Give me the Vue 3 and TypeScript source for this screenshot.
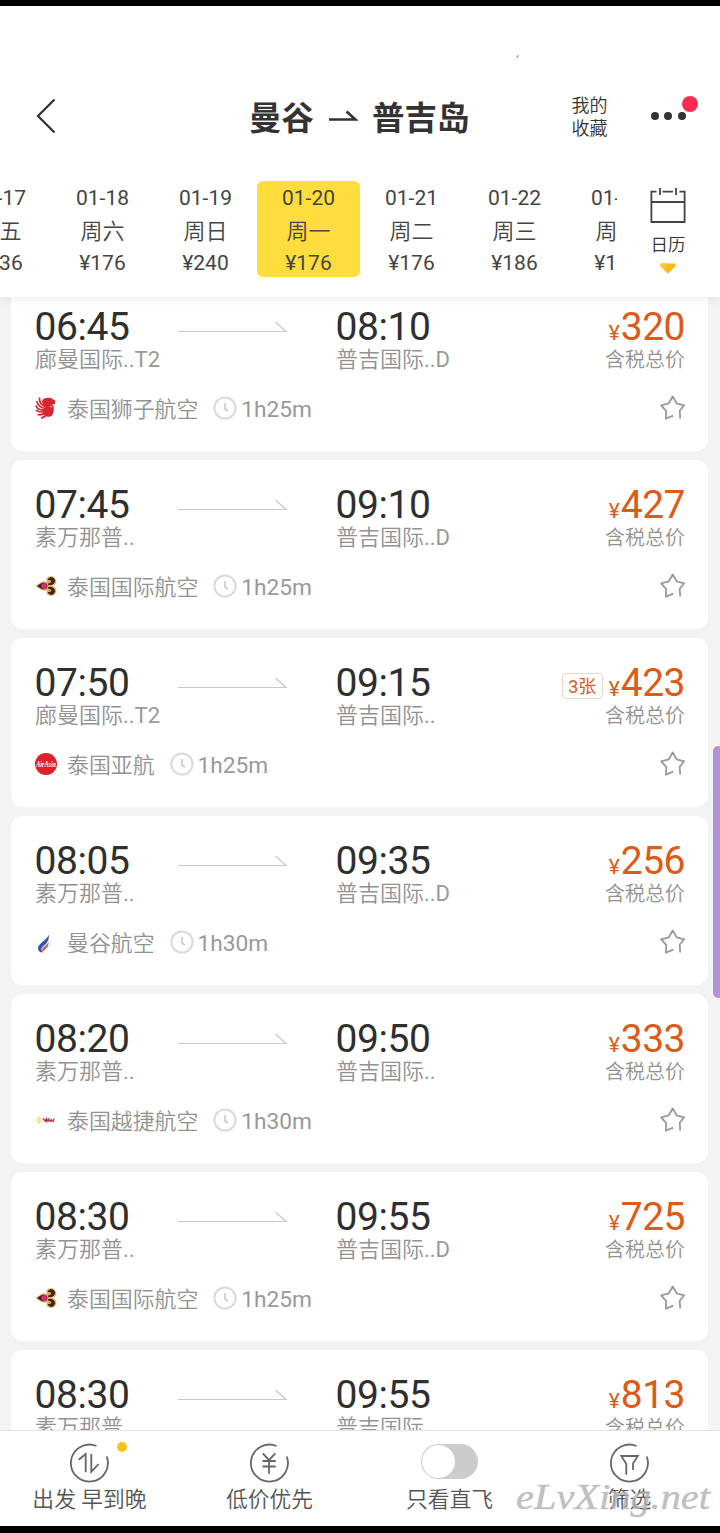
<script setup lang="ts">
interface DateItem {
  date: string
  week: string
  price: string
}
interface Airport {
  name: string
  tail: string
}
interface Flight {
  dep: string
  from: Airport
  arr: string
  to: Airport
  price: number
  airline: string
  logo: 'lion' | 'thai' | 'asia' | 'bangkok' | 'vietjet'
  duration: string
  left?: string
}

const activeDate = '01-20'
const dates: DateItem[] = [
  { date: '01-17', week: '周五', price: '¥136' },
  { date: '01-18', week: '周六', price: '¥176' },
  { date: '01-19', week: '周日', price: '¥240' },
  { date: '01-20', week: '周一', price: '¥176' },
  { date: '01-21', week: '周二', price: '¥176' },
  { date: '01-22', week: '周三', price: '¥186' },
  { date: '01-23', week: '周四', price: '¥186' },
]

const donMueang: Airport = { name: '廊曼国际', tail: '..T2' }
const suvarnabhumi: Airport = { name: '素万那普', tail: '..' }
const phuketD: Airport = { name: '普吉国际', tail: '..D' }
const phuket: Airport = { name: '普吉国际', tail: '..' }

const flights: Flight[] = [
  { dep: '06:45', from: donMueang, arr: '08:10', to: phuketD, price: 320, airline: '泰国狮子航空', logo: 'lion', duration: '1h25m' },
  { dep: '07:45', from: suvarnabhumi, arr: '09:10', to: phuketD, price: 427, airline: '泰国国际航空', logo: 'thai', duration: '1h25m' },
  { dep: '07:50', from: donMueang, arr: '09:15', to: phuket, price: 423, airline: '泰国亚航', logo: 'asia', duration: '1h25m', left: '3张' },
  { dep: '08:05', from: suvarnabhumi, arr: '09:35', to: phuketD, price: 256, airline: '曼谷航空', logo: 'bangkok', duration: '1h30m' },
  { dep: '08:20', from: suvarnabhumi, arr: '09:50', to: phuket, price: 333, airline: '泰国越捷航空', logo: 'vietjet', duration: '1h30m' },
  { dep: '08:30', from: suvarnabhumi, arr: '09:55', to: phuketD, price: 725, airline: '泰国国际航空', logo: 'thai', duration: '1h25m' },
  { dep: '08:30', from: suvarnabhumi, arr: '09:55', to: phuket, price: 813, airline: '泰国国际航空', logo: 'thai', duration: '1h25m' },
]
</script>

<template>
  <div class="screen">
    <header class="top">
      <i class="speck"></i>
      <div class="nav">
        <svg class="back" width="24" height="38" viewBox="0 0 24 38">
          <path d="M20.500 2.500 4 19l16.500 16.500" fill="none" stroke="#333" stroke-width="2.300" />
        </svg>
        <h1 class="title">
          <span>曼谷</span>
          <svg width="30" height="14" viewBox="0 0 30 14">
            <path d="M1 10.500H27.500L18.500 2.500" fill="none" stroke="#333" stroke-width="2.600" />
          </svg>
          <span>普吉岛</span>
        </h1>
        <div class="fav">我的<br />收藏</div>
        <div class="more"><i></i><i></i><i></i><b></b></div>
      </div>
      <div class="dates">
        <div class="strip">
          <div v-for="d in dates" :key="d.date" class="day" :class="{ active: d.date === activeDate }">
            <span class="num">{{ d.date }}</span>
            <span class="week">{{ d.week }}</span>
            <span class="num">{{ d.price }}</span>
          </div>
        </div>
        <div class="calendar">
          <svg width="36" height="36" viewBox="0 0 36 36" fill="none" stroke="#444" stroke-width="1.800">
            <path d="M6.500 3.700H1.400V34H34.600V3.700H29.500M12.500 3.700H23M1.400 14H34.600M10 0V7M26 0V7" />
          </svg>
          <span>日历</span>
          <svg class="tri" width="16" height="11" viewBox="0 0 16 11">
            <path d="M.5 0.500H15.500V3.500L8 10.500.5 3.500Z" fill="#fbb917" />
            <path d="M.5.500H9L4 6.500.5 3.500Z" fill="#fdc83c" />
          </svg>
        </div>
      </div>
    </header>

    <main class="list">
      <article v-for="(f, i) in flights" :key="i" class="card">
        <div class="main">
          <div class="point">
            <div class="time">{{ f.dep }}</div>
            <div class="port">{{ f.from.name }}<span>{{ f.from.tail }}</span></div>
          </div>
          <svg class="arrow" width="110" height="12" viewBox="0 0 110 12">
            <path d="M0 10.500H108L97.500 1" fill="none" stroke="#c8c8c8" stroke-width="1.200" />
          </svg>
          <div class="point">
            <div class="time">{{ f.arr }}</div>
            <div class="port">{{ f.to.name }}<span>{{ f.to.tail }}</span></div>
          </div>
          <div class="cost">
            <div class="price">
              <span v-if="f.left" class="left">{{ f.left }}</span>
              <small>¥</small><span>{{ f.price }}</span>
            </div>
            <div class="tax">含税总价</div>
          </div>
        </div>
        <div class="meta">
          <svg class="logo" width="22" height="24" viewBox="0 0 22 24">
            <g v-if="f.logo === 'lion'">
              <g fill="none" stroke="#dc2430" stroke-width="1.700">
                <path d="M4.500 1.500C4 6 7 9.500 11 11" />
                <path d="M1.800 5C2 9 6 12 10.500 12.500" />
                <path d="M.8 9.500C2 13 6 14.500 10.500 14" />
                <path d="M.8 14C3.500 16.500 7 16.500 11 15" />
                <path d="M2.500 18.500C5.500 19.500 9 18 11.500 16" />
                <path d="M6 21.800C8.500 21.800 11 19.500 12.500 17" />
              </g>
              <path d="M7.500 4C9 1.500 15 .8 17.500 3L20 4.500V8L17 8.500 15 10.500 13 12 9.500 10C7.500 8.500 6.500 6 7.500 4Z" fill="#dc2430" />
              <circle cx="13.300" cy="15.500" r="5.200" fill="#dc2430" />
              <path d="M16 18Q19.500 13 16.500 9" fill="none" stroke="#dc2430" stroke-width="2" />
            </g>
            <g v-else-if="f.logo === 'thai'">
              <path d="M.5 12 7 7.700Q10 6.500 12 8.500 10 3 15 2.200 20.500 2 21.300 7 21.500 11 16 11.800 21.500 12.500 21.300 17 20.500 22 15 21.700 10 21 12 15.500 10 17.500 7 16.300Z" fill="#dcae4c" />
              <path d="M2 12 7 8.800Q12 8 12.500 12 12 16 7 15.200Z" fill="#3d1c35" />
              <path d="M13 5.500Q15 2.500 18 4 21 6.500 18.500 9.500 16 11.500 13 10.200 17 9.500 16.700 7 15.500 5 13 5.500ZM13 18.500Q15 21.500 18 20 21 17.500 18.500 14.500 16 12.500 13 13.800 17 14.500 16.700 17 15.500 19 13 18.500Z" fill="#481c26" stroke="#481c26" stroke-width="1" />
              <circle cx="9" cy="12" r="2.900" fill="#d42a72" />
            </g>
            <g v-else-if="f.logo === 'asia'">
              <circle cx="11" cy="12" r="11" fill="#df2127" />
              <text x="11" y="14.500" text-anchor="middle" class="asia" textLength="19.500" lengthAdjust="spacingAndGlyphs">AirAsia</text>
            </g>
            <g v-else-if="f.logo === 'bangkok'">
              <path d="M13.800 1.500C15.500 9 3.500 12 3 18.500 3 21.500 6 22.800 7.500 22.500 4 17 13.500 15 13.800 7Z" fill="#2e579f" />
              <path d="M13.500 8.500C13.500 14 5.500 16 6 20 9 16.500 13.800 16 13.500 8.500Z" fill="#b7c5dd" />
              <path d="M13.800 11.500C13.500 16 5.500 17 7.500 22.800 8.500 19 14 18.500 13.800 11.500Z" fill="#d74855" />
            </g>
            <g v-else>
              <g fill="none" stroke="#f5e36b" stroke-width="1.400">
                <path d="M4.300 8V16M1.500 10 7 14M7 10 1.500 14" />
              </g>
              <path d="M8 10.500 10 13 11.500 10.800 11.700 13.500 13.800 11 14 13H15.500L16.500 11M15.500 13H18.500L19 10.500" fill="none" stroke="#b93740" stroke-width="1.400" />
            </g>
          </svg>
          <span class="airline">{{ f.airline }}</span>
          <svg class="clock" width="24" height="24" viewBox="0 0 24 24" fill="none">
            <circle cx="12" cy="12" r="10.600" stroke="#dadada" stroke-width="2" />
            <path d="M12 7V13L14.800 15.200" stroke="#c8c8c8" stroke-width="1.600" />
          </svg>
          <span class="duration">{{ f.duration }}</span>
          <svg class="star" width="26" height="26" viewBox="0 0 26 26">
            <path d="M13.300 20.700 5.800 23.700 6.300 16.200 1.200 10.300 8.800 8.300 12.700 1.500 16.700 8.300 24.200 10.300 19.700 15.800 20.200 23.500" fill="none" stroke="#999" stroke-width="1.800" stroke-linejoin="round" />
          </svg>
        </div>
      </article>
    </main>

    <footer class="tabs">
      <div class="tab">
        <svg width="40" height="40" viewBox="0 0 40 40" class="icon">
          <path d="M27.500 3A18.500 18.500 0 1 0 37.700 13.500" />
          <path d="M9.700 16.700 16.700 11V29.300M22.300 11V28.700L29.700 21" />
        </svg>
        <i class="dot"></i>
        <span>出发 早到晚</span>
      </div>
      <div class="tab">
        <svg width="40" height="40" viewBox="0 0 40 40" class="icon">
          <path d="M27.500 3A18.500 18.500 0 1 0 37.700 13.500" />
          <path d="M13.800 10.300 20 17.200 26.300 10.300M20 17V30.700M13.500 18H26.700M13.500 23.500H26.700" />
        </svg>
        <span>低价优先</span>
      </div>
      <div class="tab">
        <div class="switch"></div>
        <span>只看直飞</span>
      </div>
      <div class="tab">
        <svg width="40" height="40" viewBox="0 0 40 40" class="icon">
          <path d="M27.500 3A18.500 18.500 0 1 0 37.700 13.500" />
          <path d="M17.300 31.700V21L12.300 13H28.800L24 20.500V27" />
        </svg>
        <span>筛选</span>
      </div>
      <svg class="mark" width="200" height="52" viewBox="0 0 200 52">
        <text x="2" y="32" textLength="194" lengthAdjust="spacingAndGlyphs">eLvXing.net</text>
      </svg>
    </footer>
    <i class="handle"></i>
  </div>
</template>

<style>
body {
  margin: 0;
}
</style>

<style scoped>
.screen {
  position: relative;
  box-sizing: border-box;
  width: 720px;
  height: 1533px;
  border-top: 6px solid #000;
  border-bottom: 7px solid #000;
  display: flex;
  flex-direction: column;
  overflow: hidden;
  background: #f3f3f3;
  color: #333;
  font-family: Roboto, "Noto Sans CJK SC", sans-serif;
}
.top {
  position: relative;
  z-index: 1;
  flex: none;
  box-sizing: border-box;
  height: 291px;
  padding-top: 75px;
  background: #fff;
  box-shadow: 0 2px 10px rgba(0, 0, 0, 0.07);
}
.speck {
  position: absolute;
  left: 517px;
  top: 49px;
  width: 1px;
  height: 3px;
  background: #777;
  transform: rotate(30deg);
}
.nav {
  display: grid;
  grid-template-columns: 34px 215px 322.500px 79.500px 1fr;
  height: 70px;
  align-items: center;
}
.back {
  grid-column: 2;
}
.title {
  margin: 6px 0 0;
  display: flex;
  align-items: center;
  font-size: 32.500px;
  line-height: 40px;
  font-weight: 700;
}
.title svg {
  margin: -6px 14px 0 14px;
}
.fav {
  padding-top: 2px;
  font-size: 18px;
  line-height: 23px;
  font-weight: 350;
}
.more {
  position: relative;
  display: flex;
  gap: 5.400px;
}
.more i {
  width: 8px;
  height: 8px;
  border-radius: 50%;
  background: #333;
}
.more b {
  position: absolute;
  left: 31px;
  top: -16px;
  width: 16px;
  height: 16px;
  border-radius: 50%;
  background: #fb2c52;
}
.dates {
  display: flex;
  margin-top: 30px;
}
.strip {
  width: 617px;
  overflow: hidden;
  display: flex;
}
.day {
  flex: none;
  box-sizing: border-box;
  width: 103px;
  height: 96px;
  padding-top: 3px;
  border-radius: 6px;
  display: flex;
  flex-direction: column;
  align-items: center;
  color: #444;
}
.day:first-child {
  margin-left: -52px;
}
.day.active {
  background: #fedd3d;
}
.num {
  font-size: 21px;
  line-height: 28px;
}
.week {
  padding-top: 2px;
  font-size: 22px;
  line-height: 35px;
  font-weight: 350;
}
.calendar {
  width: 36px;
  margin-left: 33px;
  padding-top: 7px;
  display: flex;
  flex-direction: column;
  align-items: center;
}
.calendar svg {
  flex: none;
}
.calendar span {
  margin-top: 8px;
  font-size: 17.500px;
  line-height: 26px;
  font-weight: 350;
  white-space: nowrap;
}
.calendar .tri {
  margin-top: 5px;
}
.list {
  flex: 1;
  min-height: 0;
  overflow: hidden;
  padding: 0 12px 0 11px;
}
.card {
  box-sizing: border-box;
  height: 169px;
  margin-bottom: 9px;
  padding: 25px 23px 0 24px;
  border-radius: 12px;
  background: #fff;
}
.card:first-child {
  margin-top: -15px;
}
.main {
  display: grid;
  grid-template-columns: 143px 158px 120px 1fr;
}
.time {
  margin-left: -0.500px;
  font-size: 39px;
  line-height: 40px;
  color: #2f2f2f;
  letter-spacing: -0.400px;
}
.port {
  margin-top: 1px;
  font-size: 22px;
  line-height: 24px;
  font-weight: 350;
  color: #929292;
  white-space: nowrap;
}
.port span {
  font-weight: 400;
  color: #999;
}
.arrow {
  margin-top: 14px;
}
.cost {
  text-align: right;
}
.price {
  display: flex;
  justify-content: flex-end;
  align-items: baseline;
  height: 40px;
  font-size: 39px;
  line-height: 40px;
  letter-spacing: -0.500px;
  color: #dd5a17;
}
.price small {
  font-size: 21px;
  margin-right: 1.500px;
}
.left {
  box-sizing: border-box;
  align-self: flex-start;
  width: 41px;
  height: 26px;
  margin: 10px 6px 0 0;
  border: 1px solid #f2d3c8;
  border-radius: 4px;
  font-size: 18px;
  line-height: 25px;
  letter-spacing: 0;
  text-align: center;
}
.tax {
  margin-top: 2px;
  font-size: 20px;
  line-height: 22px;
  font-weight: 350;
  color: #929292;
}
.meta {
  display: flex;
  align-items: center;
  height: 26px;
  margin-top: 24px;
  color: #999;
  font-size: 22px;
  line-height: 26px;
}
.logo {
  margin: -2px 10px 0 0;
}
.airline {
  padding-top: 1px;
  font-size: 21.900px;
  font-weight: 350;
  color: #929292;
}
.clock {
  margin: -2px 4px 0 15px;
}
.duration {
  padding-top: 1px;
  font-size: 22.700px;
}
.star {
  margin: -3px -1px 0 auto;
}
.asia {
  font: italic bold 8px "Liberation Serif", serif;
  fill: #fff;
}
.tabs {
  position: relative;
  flex: none;
  box-sizing: border-box;
  height: 96px;
  border-top: 1px solid #e4e4e4;
  background: #fff;
  display: grid;
  grid-template-columns: repeat(4, 180px);
}
.tab {
  position: relative;
  display: flex;
  flex-direction: column;
  align-items: center;
  padding: 12px 1px 0 0;
  color: #555;
  font-size: 21.800px;
  line-height: 28px;
  font-weight: 350;
  white-space: nowrap;
}
.tab span {
  margin-top: 3px;
}
.icon {
  margin-right: 1px;
  fill: none;
  stroke: #666;
  stroke-width: 1.800;
}
.dot {
  position: absolute;
  left: 117px;
  top: 11px;
  width: 10px;
  height: 10px;
  border-radius: 50%;
  background: #f7c417;
}
.switch {
  box-sizing: border-box;
  width: 57px;
  height: 35px;
  margin: 1px 0 4px;
  padding: 1px;
  border-radius: 18px;
  background: #ccc;
}
.switch::before {
  content: "";
  display: block;
  width: 33px;
  height: 33px;
  border-radius: 50%;
  background: #fff;
}
.mark {
  position: absolute;
  left: 514px;
  top: 46px;
}
.mark text {
  font: italic 36px "Liberation Serif", serif;
  fill: rgba(175, 175, 175, 0.8);
  stroke: rgba(185, 185, 185, 0.6);
  stroke-width: 0.600px;
}
.handle {
  position: absolute;
  z-index: 2;
  left: 713px;
  top: 740px;
  width: 10px;
  height: 252px;
  border-radius: 6px;
  background: #b294d2;
}
</style>
